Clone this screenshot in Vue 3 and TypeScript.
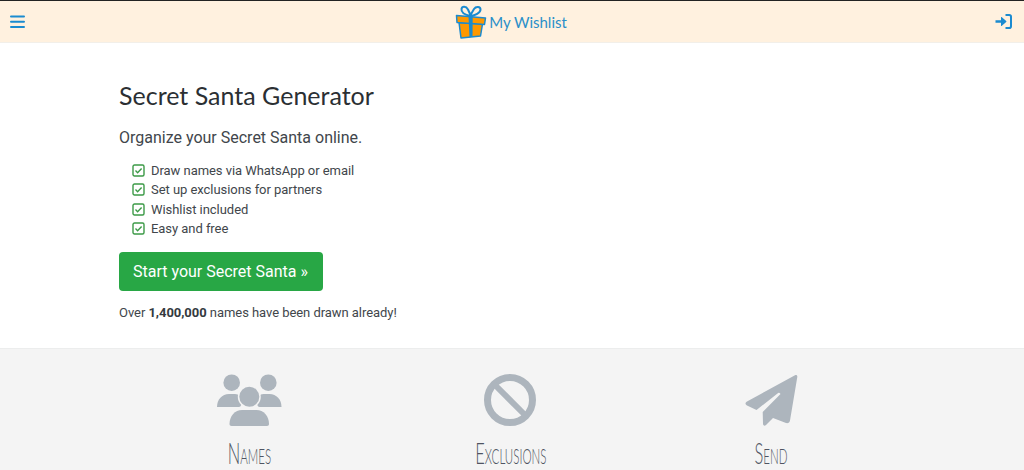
<script setup lang="ts">
const benefits: string[] = [
  'Draw names via WhatsApp or email',
  'Set up exclusions for partners',
  'Wishlist included',
  'Easy and free',
]

const steps: string[] = ['Names', 'Exclusions', 'Send']
</script>

<template>
  <div class="page">
    <header class="topbar">
      <svg class="menu-icon" viewBox="0 0 15 13" aria-hidden="true">
        <path d="M1 1.500h13M1 6.800h13M1 12h13" />
      </svg>
      <div class="brand">
        <svg class="gift" viewBox="3 1 34 36" aria-hidden="true">
          <path class="gift-bow" d="M19.500 13C15 12 10 9.500 10.500 6 11 3 15 3 17 6.500L19.500 12 23 6C25 3 29.500 3.500 29.500 6.500 29.500 10 24 12.500 19.500 13Z" />
          <path class="gift-box" d="M8 19.500 31.500 21 29.500 33 10 35Z" />
          <path class="gift-lid" d="M5.500 12.500 34.500 15 33.500 21.500 6 19.500Z" />
          <path class="gift-ribbon" d="M17.500 13.200h4.200L21.500 33.500 18.500 34.500Z" />
        </svg>
        <span class="brand-name">My Wishlist</span>
      </div>
      <svg class="login-icon" viewBox="0 0 17 15" aria-hidden="true">
        <path class="login-arrow" d="M0.500 6.300h5.500V3.600a.5.500 0 0 1 .9-.4l4.300 3.800a.7.700 0 0 1 0 1L6.900 11.800a.5.500 0 0 1-.9-.4V8.700H.5Z" />
        <path class="login-frame" d="M10.500 1h3.700a1.800 1.800 0 0 1 1.800 1.800v9.400A1.800 1.800 0 0 1 14.200 14h-3.700" />
      </svg>
    </header>

    <main class="intro">
      <h1>Secret Santa Generator</h1>
      <p class="lead">Organize your Secret Santa online.</p>
      <ul class="benefits">
        <li v-for="item in benefits" :key="item">
          <svg class="check" viewBox="0 0 13 13" aria-hidden="true">
            <rect x="1" y="1" width="11" height="11" rx="1.500" />
            <path d="M3.500 6.600 5.600 8.700 9.600 4.500" />
          </svg>
          {{ item }}
        </li>
      </ul>
      <a class="cta" href="#">Start your Secret Santa »</a>
      <p class="count">Over <strong>1,400,000</strong> names have been drawn already!</p>
    </main>

    <section class="steps">
      <div v-for="step in steps" :key="step" class="step">
        <svg v-if="step === 'Names'" class="step-icon" viewBox="1 0 66 54" aria-hidden="true">
          <circle cx="15.700" cy="8.700" r="8.300" />
          <circle cx="52.300" cy="8.700" r="8.300" />
          <path d="M1 33C1 25.500 6 20 13 20h6c8 0 8 13 4 13Z" />
          <path d="M65.500 33C65.500 25.500 60.500 20 53.500 20h-6c-8 0-8 13-4 13Z" />
          <circle class="halo" cx="33.300" cy="22.700" r="10" />
          <path class="halo" d="M13.500 50C13.500 42 19 36 26 36h14.500c7 0 12.500 6 12.500 14 0 1.200-.8 2-2 2H15.500c-1.200 0-2-.8-2-2Z" />
        </svg>
        <svg v-else-if="step === 'Exclusions'" class="step-icon" viewBox="1 0 66 54" aria-hidden="true">
          <circle class="ban-ring" cx="33" cy="26" r="22.500" />
          <path class="ban-bar" d="M17 10 49 42" />
        </svg>
        <svg v-else class="step-icon" viewBox="0 0 66 54" aria-hidden="true">
          <path d="M56 1.200C57.500 .5 58.500 1.500 58.300 3L51 46.500C50.800 48.500 49 49.500 47 49L34 44 27 51C25.500 52.500 24 51.500 24 49.500L23.700 38 41.500 20C40.500 18.500 39.500 18.500 38.500 19.500L17.500 36 8 31.500C6 30.500 6 28.500 8 27.500Z" />
        </svg>
        <h2>{{ step }}</h2>
      </div>
    </section>
  </div>
</template>

<style>
html,
body {
  margin: 0;
  overflow: hidden;
}
</style>

<style scoped>
.page {
  width: 1024px;
  height: 470px;
  overflow: hidden;
  background: #fff;
  color: #41464b;
  font-family: Roboto, "Liberation Sans", sans-serif;
}

.topbar {
  box-sizing: border-box;
  height: 43px;
  display: flex;
  align-items: center;
  justify-content: space-between;
  padding: 0 12px 0 10px;
  background: #fff1df;
  border-top: 1px solid #222;
  border-bottom: 1px solid #f2efe9;
}

.menu-icon {
  width: 15px;
  height: 13px;
  fill: none;
  stroke: #1b8bd0;
  stroke-width: 2;
  stroke-linecap: round;
}

.brand {
  display: flex;
  align-items: center;
  gap: 1px;
  margin-left: 1px;
}

.gift {
  width: 34px;
  height: 36px;
}

.gift-bow {
  fill: none;
  stroke: #1b8bd0;
  stroke-width: 2;
}

.gift-box,
.gift-lid {
  fill: #ff9800;
  stroke: #1b8bd0;
  stroke-width: 1.500;
  stroke-linejoin: round;
}

.gift-ribbon {
  fill: #1b8bd0;
}

.brand-name {
  color: #2a8fc9;
  font-family: Lato, sans-serif;
  font-size: 15px;
}

.login-icon {
  width: 17px;
  height: 15px;
}

.login-arrow {
  fill: #1b8bd0;
}

.login-frame {
  fill: none;
  stroke: #1b8bd0;
  stroke-width: 2;
}

.intro {
  box-sizing: border-box;
  height: 306px;
  padding: 36px 0 0 119px;
  border-bottom: 1px solid #eceded;
}

h1 {
  margin: 0;
  font-family: Lato, sans-serif;
  font-size: 25px;
  font-weight: 400;
  line-height: 32px;
  color: #2b2f33;
}

.lead {
  margin: 15px 0 0;
  font-size: 16px;
  line-height: 24px;
}

.benefits {
  margin: 11px 0 0;
  padding: 0 0 0 13px;
  list-style: none;
  font-size: 13px;
  line-height: 19.330px;
  letter-spacing: -0.05px;
}

.benefits li {
  display: flex;
  align-items: center;
  gap: 6px;
}

.check {
  width: 13px;
  height: 13px;
  fill: none;
  stroke: #3c9a47;
  stroke-width: 1.400;
}

.cta {
  display: block;
  box-sizing: border-box;
  width: 204px;
  height: 39px;
  margin-top: 14px;
  padding-right: 1px;
  border-radius: 4px;
  background: #28a745;
  color: #fff;
  font-size: 16px;
  line-height: 39px;
  text-align: center;
  text-decoration: none;
}

.count {
  margin: 11px 0 0;
  font-size: 13px;
  line-height: 21px;
  letter-spacing: -0.05px;
}

.count strong {
  font-weight: 700;
  color: #343a40;
}

.steps {
  display: grid;
  grid-template-columns: repeat(3, 261px);
  height: 121px;
  padding: 25px 0 0 119px;
  background: #f4f4f4;
}

.step {
  display: flex;
  flex-direction: column;
  align-items: center;
}

.step-icon {
  width: 66px;
  height: 54px;
  fill: #adb5bd;
}

.halo {
  stroke: #f4f4f4;
  stroke-width: 3;
  paint-order: stroke;
}

.ban-ring {
  fill: none;
  stroke: #adb5bd;
  stroke-width: 7;
}

.ban-bar {
  fill: none;
  stroke: #adb5bd;
  stroke-width: 6;
}

h2 {
  margin: 9px 0 0;
  color: #4f5462;
  font-family: Lato, sans-serif;
  font-size: 30px;
  font-weight: 300;
  font-variant: small-caps;
  line-height: 30px;
  transform: scaleX(0.55);
}
</style>
